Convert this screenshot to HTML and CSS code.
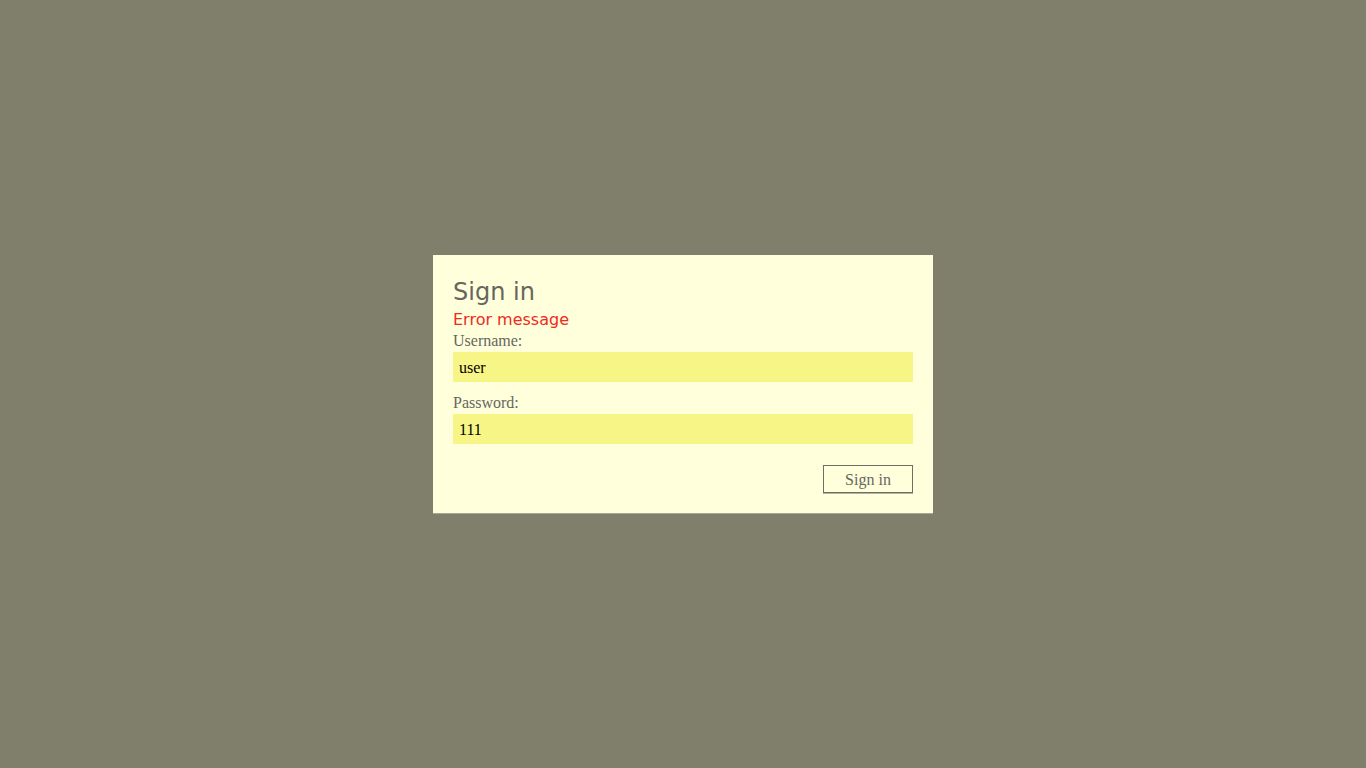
FILE: index.html
```html
<!DOCTYPE html>
<html>
<head>
<meta charset="utf-8">
<link rel="stylesheet" href="styles.css">
</head>
<body>
<div class="page">
  <form class="card">
    <h1 class="title">Sign in</h1>
    <div class="error">Error message</div>
    <label class="label">Username:</label>
    <input class="field" type="text" value="user">
    <label class="label label-second">Password:</label>
    <input class="field" type="text" value="111">
    <div class="actions">
      <button class="btn" type="button">Sign in</button>
    </div>
  </form>
</div>
</body>
</html>
```
FILE: styles.css
```css
html, body {
  margin: 0;
  padding: 0;
  height: 100%;
}
body {
  background: #7f7f6c;
  font-family: "Liberation Serif", serif;
}
.page {
  height: 100%;
  display: flex;
  align-items: center;
  justify-content: center;
}
.card {
  width: 460px;
  padding: 20px;
  background: #ffffdc;
  box-shadow: 0 1px 0 #a8a890;
  display: flex;
  flex-direction: column;
}
.title {
  margin: 0;
  padding-top: 1px;
  font-family: "DejaVu Sans", Verdana, sans-serif;
  font-weight: normal;
  font-size: 24px;
  line-height: 33px;
  color: #666660;
}
.error {
  font-family: "DejaVu Sans", Verdana, sans-serif;
  font-size: 16px;
  line-height: 21px;
  margin-bottom: 2px;
  color: #ee2a22;
}
.label {
  font-size: 16px;
  line-height: 18px;
  color: #666660;
  margin-bottom: 2px;
}
.label-second {
  margin-top: 12px;
}
.field {
  box-sizing: border-box;
  width: 460px;
  height: 30px;
  border: none;
  outline: none;
  background: #f8f587;
  padding: 2px 6px 0;
  font-family: "Liberation Serif", serif;
  font-size: 16px;
  color: #000;
  margin: 0;
}
.actions {
  display: flex;
  justify-content: flex-end;
  margin-top: 21px;
}
.btn {
  box-sizing: border-box;
  width: 90px;
  height: 28px;
  background: transparent;
  border: 1px solid #6e6e66;
  box-shadow: 0 1px 0 #b5b498;
  font-family: "Liberation Serif", serif;
  font-size: 16px;
  color: #666660;
  padding: 2px 0 0;
  margin: 0;
}
```
